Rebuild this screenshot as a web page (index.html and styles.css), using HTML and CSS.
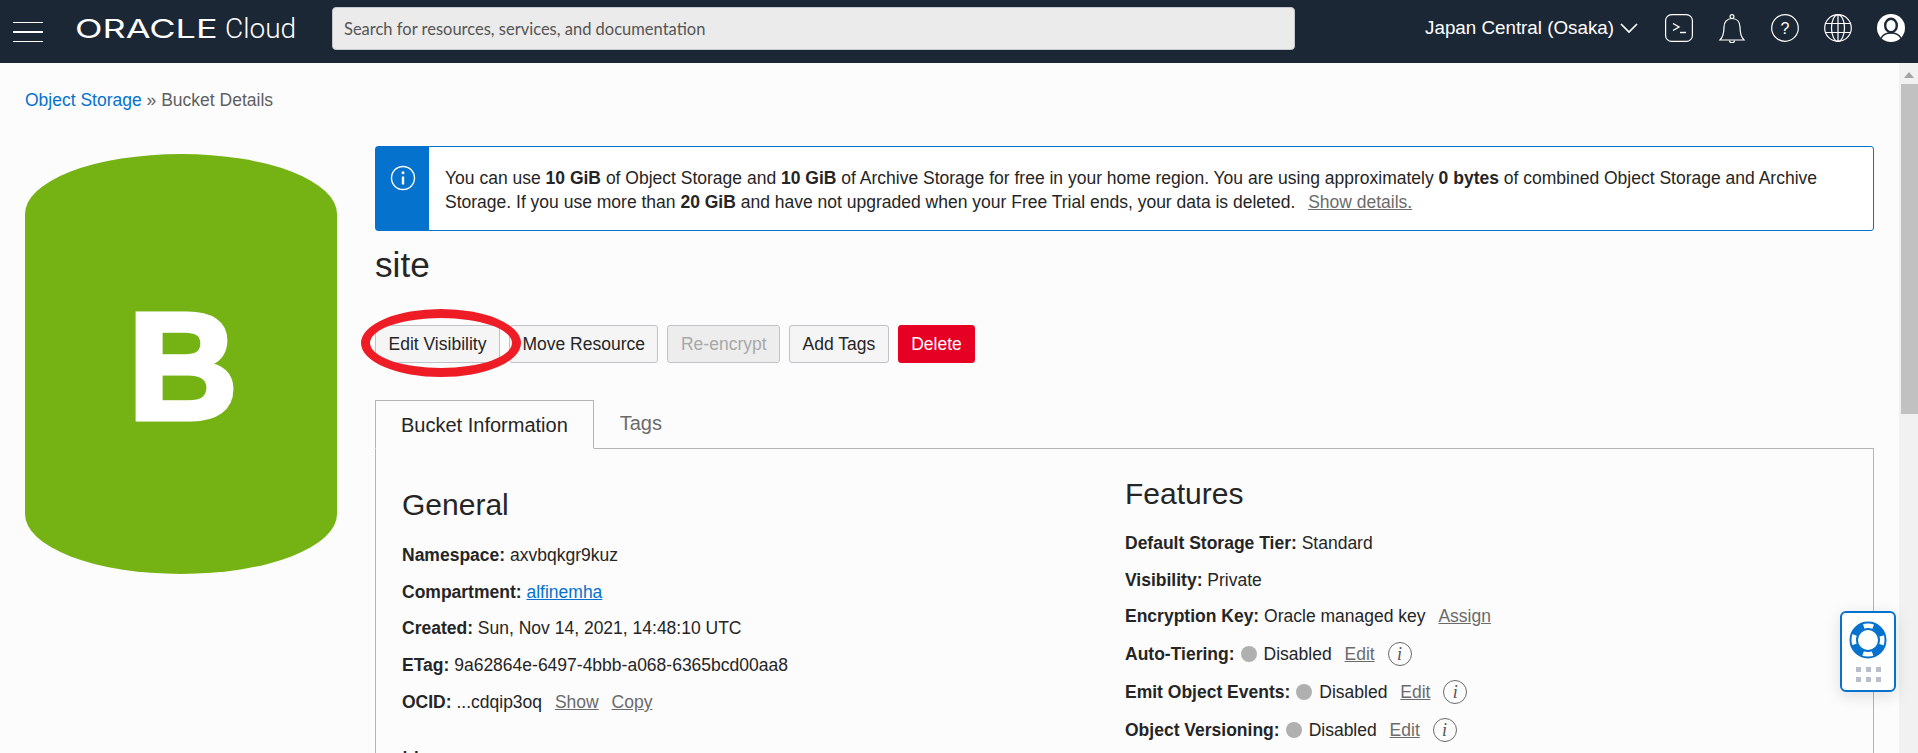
FILE: index.html
```html
<!DOCTYPE html>
<html lang="en">
<head>
    <meta charset="UTF-8">
    <title>Bucket Details</title>
    <link rel="stylesheet" href="styles.css">
</head>
<body>

    <header class="top-bar">
        <div class="menu-icon"><span></span><span></span><span></span></div>
        <div class="brand"><span class="brand-oracle">ORACLE</span><span class="brand-cloud">Cloud</span></div>
        <div class="search-box">Search for resources, services, and documentation</div>
        <div class="region">Japan Central (Osaka)
            <svg width="18" height="11" viewBox="0 0 18 11"><path d="M1 1l8 8 8-8" fill="none" stroke="#fff" stroke-width="1.7"/></svg>
        </div>
        <div class="top-icons">
            <svg width="28" height="28" viewBox="0 0 28 28" fill="none" stroke="#fff" stroke-width="1.2"><rect x="0.6" y="0.6" width="26.8" height="26.8" rx="6"/><path d="M8 9.500l6 3.500-6 3.500" stroke-width="1.400"/><path d="M15 18.500h6" stroke-width="1.400"/></svg>
            <svg width="28" height="29" viewBox="0 0 28 29" fill="none" stroke="#fff" stroke-width="1.2"><path d="M2 26c3-3 4-6 4-13 0-5 3-8.500 8-8.500s8 3.500 8 8.500c0 7 1 10 4 13z"/><circle cx="14" cy="2.600" r="1.900"/><path d="M11.500 26.500a2.500 2.300 0 0 0 5 0"/></svg>
            <svg width="28" height="28" viewBox="0 0 28 28" fill="none" stroke="#fff" stroke-width="1.2"><circle cx="14" cy="14" r="13.300"/><text x="14" y="19.500" text-anchor="middle" class="icon-text">?</text></svg>
            <svg width="28" height="28" viewBox="0 0 28 28" fill="none" stroke="#fff" stroke-width="1.2"><circle cx="14" cy="14" r="13.300"/><ellipse cx="14" cy="14" rx="6.500" ry="13.300"/><path d="M14 0.700v26.600M1.800 9.500h24.400M1.800 18.500h24.400"/></svg>
            <svg width="28" height="28" viewBox="0 0 28 28"><circle cx="14" cy="14" r="14" fill="#fff"/><ellipse cx="14" cy="11.500" rx="5.800" ry="6.800" fill="none" stroke="#1c2735" stroke-width="2.400"/><path d="M4 24.500c2-4.500 6-5.500 10-5.500s8 1 10 5.500" fill="none" stroke="#1c2735" stroke-width="1.400"/></svg>
        </div>
    </header>

    <div class="page-wrap">
        <main class="content">
            <div class="breadcrumb"><a href="#">Object Storage</a> » Bucket Details</div>

            <div class="details">
                <div class="bucket-side">
                    <div class="bucket-icon">B</div>
                </div>

                <div class="main-col">
                    <div class="info-banner">
                        <div class="info-flag">
                            <svg width="26" height="26" viewBox="0 0 26 26" fill="none" stroke="#fff" stroke-width="1.4"><circle cx="13" cy="13" r="11.500"/><path d="M13 11.500v8" stroke-width="2.400"/><path d="M13 6.500v2.600" stroke-width="2.600"/></svg>
                        </div>
                        <p class="info-text">You can use <b>10 GiB</b> of Object Storage and <b>10 GiB</b> of Archive Storage for free in your home region. You are using approximately <b>0 bytes</b> of combined Object Storage and Archive Storage. If you use more than <b>20 GiB</b> and have not upgraded when your Free Trial ends, your data is deleted. <a class="link-grey gap" href="#">Show details.</a></p>
                    </div>

                    <h1 class="bucket-name">site</h1>

                    <div class="actions">
                        <button class="btn">Edit Visibility</button>
                        <button class="btn">Move Resource</button>
                        <button class="btn btn-disabled">Re-encrypt</button>
                        <button class="btn">Add Tags</button>
                        <button class="btn btn-danger">Delete</button>
                        <div class="red-circle"></div>
                    </div>

                    <div class="tabs">
                        <div class="tab active">Bucket Information</div>
                        <div class="tab">Tags</div>
                    </div>

                    <div class="tab-panel">
                        <section class="general">
                            <h2>General</h2>
                            <p><b>Namespace:</b> axvbqkgr9kuz</p>
                            <p><b>Compartment:</b> <a class="link-blue" href="#">alfinemha</a></p>
                            <p><b>Created:</b> Sun, Nov 14, 2021, 14:48:10 UTC</p>
                            <p><b>ETag:</b> 9a62864e-6497-4bbb-a068-6365bcd00aa8</p>
                            <p><b>OCID:</b> ...cdqip3oq <a class="link-grey gap" href="#">Show</a> <a class="link-grey gap" href="#">Copy</a></p>
                            <h3>Usage</h3>
                        </section>
                        <section class="features">
                            <h2>Features</h2>
                            <p><b>Default Storage Tier:</b> Standard</p>
                            <p><b>Visibility:</b> Private</p>
                            <p><b>Encryption Key:</b> Oracle managed key <a class="link-grey gap" href="#">Assign</a></p>
                            <p class="icon-row"><b>Auto-Tiering:</b><i class="dot"></i>Disabled <a class="link-grey gap" href="#">Edit</a> <i class="info-i">i</i></p>
                            <p class="icon-row"><b>Emit Object Events:</b><i class="dot"></i>Disabled <a class="link-grey gap" href="#">Edit</a> <i class="info-i">i</i></p>
                            <p class="icon-row"><b>Object Versioning:</b><i class="dot"></i>Disabled <a class="link-grey gap" href="#">Edit</a> <i class="info-i">i</i></p>
                        </section>
                    </div>
                </div>
            </div>
        </main>

        <div class="scrollbar">
            <div class="scroll-arrow"></div>
            <div class="scroll-thumb"></div>
        </div>

        <div class="help-widget">
            <svg width="38" height="38" viewBox="0 0 38 38" fill="none" stroke="#0572ce"><circle cx="19" cy="19" r="17.500" stroke-width="2"/><circle cx="19" cy="19" r="11" stroke-width="2"/><circle cx="19" cy="19" r="14.500" stroke-width="6" stroke-dasharray="13 9.780" stroke-dashoffset="-4.900"/></svg>
            <div class="help-dots"><span></span><span></span><span></span><span></span><span></span><span></span></div>
        </div>
    </div>

</body>
</html>
```

FILE: styles.css
```css
* {
    box-sizing: border-box;
}

html, body {
    margin: 0;
    height: 753px;
    overflow: hidden;
}

body {
    font-family: "Liberation Sans", Arial, sans-serif;
    font-size: 17.5px;
    color: #252525;
    background: #fcfcfc;
}

.top-bar {
    height: 63px;
    padding: 0 13px 7px 13px;
    background: #1c2735;
    display: flex;
    align-items: center;
    color: white;
}

.menu-icon {
    width: 30px;
    margin-top: 8px;
    display: flex;
    flex-direction: column;
    gap: 8px;
}

.menu-icon span {
    height: 1.5px;
    background: #fff;
}

.brand {
    margin-left: 32px;
    width: 257px;
    display: flex;
    align-items: baseline;
    white-space: nowrap;
}

.brand-oracle {
    display: inline-block;
    width: 150px;
    font-family: "Inter", sans-serif;
    font-size: 25px;
    font-weight: 400;
    transform: scaleX(1.44);
    transform-origin: left center;
}

.brand-cloud {
    font-family: "Roboto", sans-serif;
    font-size: 28px;
    font-weight: 300;
}

.search-box {
    width: 963px;
    height: 43px;
    padding-left: 11px;
    line-height: 43px;
    font-family: "Lato", sans-serif;
    font-size: 16.5px;
    color: #555;
    background: #ebebeb;
    border: 1px solid #c4c8cc;
    border-radius: 4px;
}

.region {
    margin-left: auto;
    font-size: 18.8px;
    white-space: nowrap;
    display: flex;
    align-items: center;
    gap: 6px;
}

.top-icons {
    margin-left: 27px;
    display: flex;
    align-items: center;
    gap: 25px;
}

.icon-text {
    font-family: "Liberation Sans", sans-serif;
    font-size: 16px;
    fill: #fff;
    stroke: none;
}

.page-wrap {
    display: flex;
    height: 690px;
    position: relative;
    overflow: hidden;
}

.content {
    flex: 1;
    min-width: 0;
    padding: 27px 25px 0 25px;
}

.breadcrumb {
    line-height: 20px;
    color: #5f5f5f;
}

.breadcrumb a {
    color: #0572ce;
    text-decoration: none;
}

.details {
    display: flex;
    margin-top: 36px;
}

.bucket-side {
    width: 350px;
    flex-shrink: 0;
    padding-top: 8px;
}

.bucket-icon {
    width: 312px;
    height: 420px;
    padding-left: 4px;
    background: #75b315;
    border-radius: 156px / 60px;
    color: white;
    font-size: 152px;
    font-weight: bold;
    -webkit-text-stroke: 5px white;
    line-height: 424px;
    text-align: center;
}

.main-col {
    flex: 1;
    min-width: 0;
}

.info-banner {
    height: 85px;
    display: flex;
    border: 1px solid #0572ce;
    border-radius: 3px;
    background: #fff;
}

.info-flag {
    width: 53px;
    flex-shrink: 0;
    background: #0572ce;
    text-align: center;
    padding-top: 18px;
}

.info-text {
    margin: 19px 40px 0 16px;
    line-height: 24px;
}

.link-grey {
    color: #6b6b6b;
    text-decoration: underline;
}

.gap {
    margin-left: 8px;
}

.link-blue {
    color: #0572ce;
}

.bucket-name {
    margin: 14px 0 0;
    font-size: 35.2px;
    font-weight: normal;
    line-height: 40px;
}

.actions {
    position: relative;
    display: flex;
    gap: 9px;
    margin-top: 40px;
}

.btn {
    height: 38px;
    padding: 0 12.5px;
    font-family: inherit;
    font-size: 17.5px;
    color: #252525;
    background: #f5f5f5;
    border: 1px solid #c0c4c9;
    border-radius: 3px;
}

.btn-disabled {
    color: #a8a8a8;
    background: #ededed;
}

.btn-danger {
    color: white;
    background: #e60023;
    border-color: #e60023;
}

.red-circle {
    position: absolute;
    left: -14px;
    top: -16px;
    width: 160px;
    height: 68px;
    border: 9px solid #ee1c25;
    border-radius: 50%;
}

.tabs {
    display: flex;
    margin-top: 37px;
    margin-bottom: -1px;
    position: relative;
}

.tab {
    padding: 12px 26px 0;
    height: 49px;
    font-size: 20px;
    color: #6b6b6b;
}

.tab.active {
    color: #252525;
    padding: 13px 25px 0;
    background: #fcfcfc;
    border: 1px solid #b5b5b5;
    border-bottom: 1px solid #fcfcfc;
}

.tab-panel {
    display: flex;
    height: 310px;
    padding: 0 26px;
    border: 1px solid #b5b5b5;
    border-bottom: none;
    overflow: hidden;
}

.tab-panel section p {
    margin: 0;
    height: 36.7px;
    line-height: 22px;
    white-space: nowrap;
}

.tab-panel section p.icon-row {
    height: 38px;
}

.tab-panel h2 {
    font-size: 30px;
    font-weight: normal;
    line-height: 36px;
    margin: 0 0 20px;
}

.tab-panel h3 {
    font-size: 24px;
    font-weight: normal;
    line-height: 28px;
    margin: 19px 0 0;
}

.general {
    width: 723px;
    padding-top: 38px;
}

.general h2 {
    margin-bottom: 21px;
}

.features {
    padding-top: 27px;
}

.dot {
    display: inline-block;
    width: 16px;
    height: 16px;
    margin: 0 7px 0 6px;
    vertical-align: -2px;
    border-radius: 50%;
    background: #b0b0b0;
}

.info-i {
    display: inline-block;
    width: 24px;
    height: 24px;
    margin-left: 8px;
    border: 1px solid #6b6b6b;
    border-radius: 50%;
    font-family: "Liberation Serif", serif;
    font-size: 18px;
    line-height: 22px;
    text-align: center;
    color: #555;
}

.scrollbar {
    width: 19px;
    flex-shrink: 0;
    background: #f1f1f1;
}

.scroll-arrow {
    width: 0;
    margin: 9px auto 0;
    border: 5px solid transparent;
    border-top: none;
    border-bottom: 6px solid #a3a3a3;
}

.scroll-thumb {
    height: 330px;
    margin: 6px 0 0 2px;
    background: #c1c1c1;
}

.help-widget {
    position: absolute;
    left: 1840px;
    top: 548px;
    width: 56px;
    height: 81px;
    padding-top: 8px;
    background: #fff;
    border: 2px solid #0572ce;
    border-radius: 6px;
    box-shadow: 0 4px 16px rgba(0, 0, 0, 0.12);
}

.help-widget svg {
    display: block;
    margin: 0 auto;
}

.help-dots {
    display: grid;
    grid-template-columns: repeat(3, 5px);
    gap: 5px;
    justify-content: center;
    margin-top: 8px;
}

.help-dots span {
    height: 5px;
    background: #b8bfca;
}
```
